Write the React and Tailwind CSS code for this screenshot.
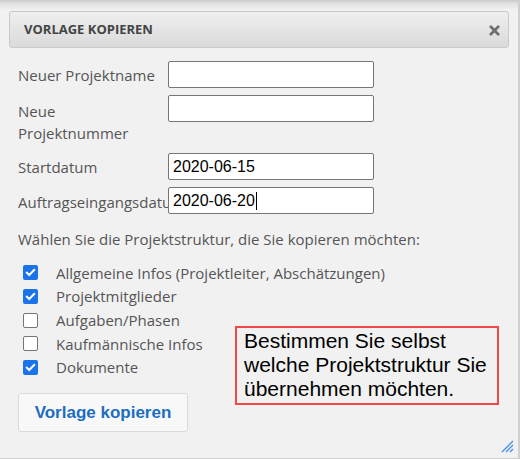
import React from 'react';

const Check = ({ checked }) =>
  checked ? (
    <span className="flex h-[15px] w-[15px] items-center justify-center rounded-[2px] bg-[#1a73e8]">
      <svg viewBox="0 0 12 12" className="h-[11px] w-[11px]" fill="none" stroke="white" strokeWidth="2.2" strokeLinecap="square">
        <path d="M2 6.2l2.6 2.6L10 3.2" />
      </svg>
    </span>
  ) : (
    <span className="h-[15px] w-[15px] rounded-[2px] border border-[#767676] bg-white" />
  );

const Field = ({ label, value }) => (
  <div className="flex items-start">
    <div className="w-[150px] shrink-0 overflow-hidden whitespace-nowrap pt-[3px] text-[15px] leading-[22px] text-[#555]">{label}</div>
    <div className="flex h-[27px] w-[206px] items-center rounded-[2px] border border-[#767676] bg-white px-[4px] font-['Liberation_Sans',Arial,sans-serif] text-[16px] text-black">
      {value}
    </div>
  </div>
);

const items = [
  ['Allgemeine Infos (Projektleiter, Abschätzungen)', true],
  ['Projektmitglieder', true],
  ['Aufgaben/Phasen', false],
  ['Kaufmännische Infos', false],
  ['Dokumente', true],
];

export default function App() {
  return (
    <div className="relative h-[459px] w-[520px] overflow-hidden border-t-2 border-r-2 border-b border-[#cfcfcf] bg-[#f1f1f1] font-['Open_Sans',sans-serif]">
      <div className="h-[8px] bg-gradient-to-b from-[#dcdcdc] to-[#f1f1f1]" />
      <div className="mx-[9px] mt-[1px] flex h-[37px] items-center justify-between rounded-[3px] border border-[#c9c9c9] bg-gradient-to-b from-[#efefef] to-[#dadada] pl-[14px] pr-[8px]">
        <span className="text-[13px] font-bold text-[#444]">VORLAGE KOPIEREN</span>
        <svg viewBox="0 0 12 12" className="mt-[2px] h-[11px] w-[11px]" stroke="#6f6f6f" strokeWidth="3" strokeLinecap="round">
          <path d="M2 2l8 8M10 2l-8 8" />
        </svg>
      </div>

      <div className="flex flex-col pl-[18px] pt-[13px]">
        <div className="flex flex-col gap-[7px]">
          <Field label="Neuer Projektname" value="" />
          <div className="flex items-start">
            <div className="w-[150px] shrink-0 pt-[5px] text-[15px] leading-[22px] text-[#555]">
              Neue
              <br />
              Projektnummer
            </div>
            <div className="h-[27px] w-[206px] rounded-[2px] border border-[#767676] bg-white" />
          </div>
        </div>
        <div className="mt-[9px] flex flex-col gap-[7px]">
          <Field label="Startdatum" value="2020-06-15" />
          <div className="flex items-start">
            <div className="w-[150px] shrink-0 overflow-hidden whitespace-nowrap pt-[4px] text-[15px] leading-[22px] text-[#555]">Auftragseingangsdatum</div>
            <div className="flex h-[27px] w-[206px] items-center rounded-[2px] border border-[#767676] bg-white px-[4px] font-['Liberation_Sans',Arial,sans-serif] text-[16px] text-black">
              2020-06-20<span className="ml-px h-[18px] w-px bg-black" />
            </div>
          </div>
        </div>

        <p className="mt-[14px] text-[15px] leading-[22px] text-[#555]">Wählen Sie die Projektstruktur, die Sie kopieren möchten:</p>

        <div className="mt-[11px] flex flex-col">
          {items.map(([t, c]) => (
            <label key={t} className="flex h-[23.7px] items-center gap-[18px] pl-[5px] text-[15px] text-[#555]">
              <Check checked={c} />
              <span>{t}</span>
            </label>
          ))}
        </div>

        <div>
          <button className="mt-[14px] h-[39px] w-[170px] rounded-[3px] border border-[#dadada] bg-[#f8f8f8] font-['Liberation_Sans',Arial,sans-serif] text-[17px] font-bold text-[#1b6ec2]">
            Vorlage kopieren
          </button>
        </div>
      </div>

      <div className="absolute left-[235px] top-[324px] h-[79px] w-[264px] border-2 border-[#f24848] bg-[#f1f1f1] pl-[7px] pr-[2px] pt-[1px] font-['Liberation_Sans',Arial,sans-serif] text-[21px] leading-[24px] text-black">
        Bestimmen Sie selbst welche Projektstruktur Sie übernehmen möchten.
      </div>

      <svg viewBox="0 0 14 14" className="absolute bottom-[5px] right-[4px] h-[14px] w-[14px]" stroke="#4a90e2" strokeWidth="1.3">
        <path d="M2 13L13 2M6 13L13 6M10 13L13 10" />
      </svg>
    </div>
  );
}
